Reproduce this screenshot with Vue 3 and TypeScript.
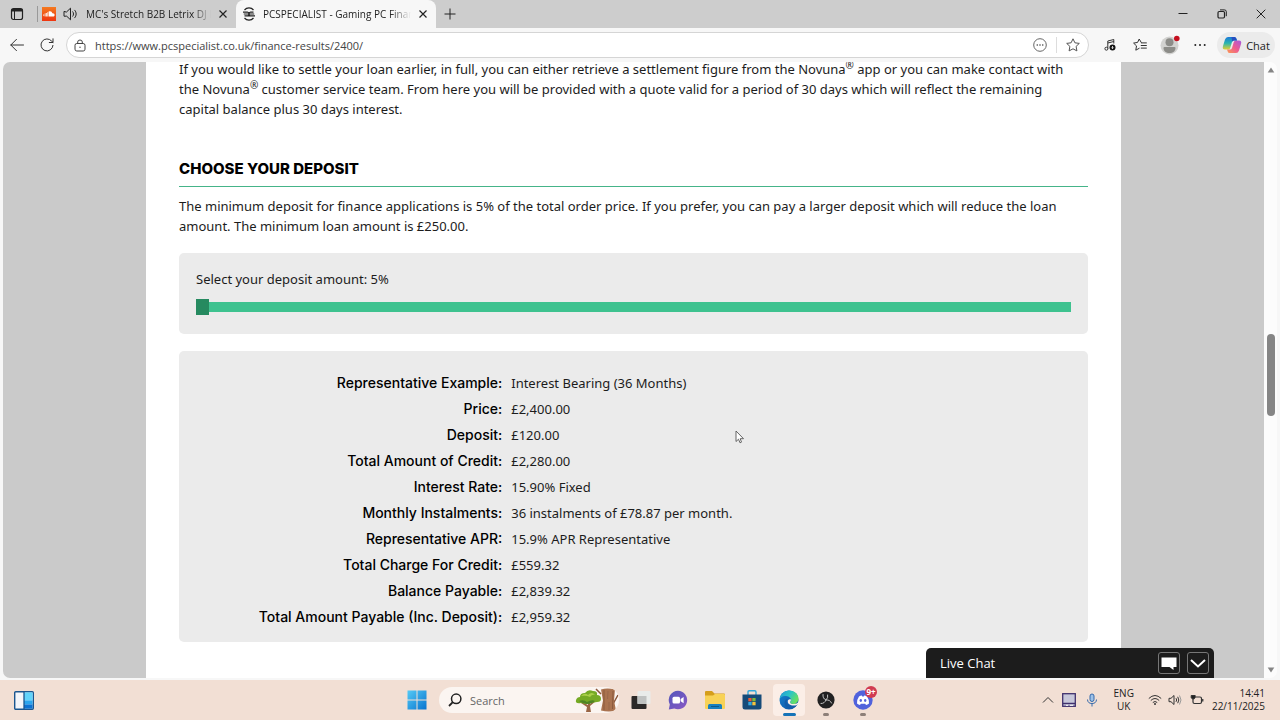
<script setup lang="ts">
import { ref } from 'vue'

interface Row {
  label: string
  value: string
}

const url = ref('https://www.pcspecialist.co.uk/finance-results/2400/')
const query = ref('')
const deposit = ref(5)

const rows: Row[] = [
  { label: 'Representative Example:', value: 'Interest Bearing (36 Months)' },
  { label: 'Price:', value: '£2,400.00' },
  { label: 'Deposit:', value: '£120.00' },
  { label: 'Total Amount of Credit:', value: '£2,280.00' },
  { label: 'Interest Rate:', value: '15.90% Fixed' },
  { label: 'Monthly Instalments:', value: '36 instalments of £78.87 per month.' },
  { label: 'Representative APR:', value: '15.9% APR Representative' },
  { label: 'Total Charge For Credit:', value: '£559.32' },
  { label: 'Balance Payable:', value: '£2,839.32' },
  { label: 'Total Amount Payable (Inc. Deposit):', value: '£2,959.32' },
]
</script>

<template>
  <div class="desktop">
    <header class="tabs">
      <button class="tab-actions" aria-label="Tab actions">
        <svg width="14" height="14" viewBox="0 0 14 14" fill="none" stroke="#222"><rect x="1.5" y="1.5" width="11" height="11" rx="2" stroke-width="1.2" /><path d="M1.5 3.2h11" stroke-width="2.6" /><path d="M4.5 4v8.5" /></svg>
      </button>
      <div class="tab">
        <svg width="14" height="14" viewBox="0 0 14 14"><defs><linearGradient id="sc" x1="0" y1="0" x2="0" y2="1"><stop offset="0" stop-color="#f47a20" /><stop offset="1" stop-color="#ee3510" /></linearGradient></defs><rect width="14" height="14" fill="url(#sc)" /><path d="M6.6 4.6C8.5 3.6 10 4.7 10.3 6.3c1.4-.3 2.3.6 2.3 1.6 0 1-.8 1.6-1.7 1.6H6.6z" fill="#fff" /><path d="M1.8 7.3v1.8M3.2 6.3v3.2M4.5 6v3.5M5.7 5.2v4.3" stroke="#fff" stroke-width=".8" /></svg>
        <svg width="16" height="14" viewBox="0 0 16 14" fill="none" stroke="#222" stroke-linejoin="round" stroke-linecap="round"><path d="M1 4.800v4.400h2.700L7.500 12.800V1.200L3.700 4.800z" /><path d="M9.800 4.8c1 1.2 1 3.2 0 4.4M11.700 3.2c2 2 2 5.6 0 7.6" /></svg>
        <span class="tab-title">MC's Stretch B2B Letrix DJ Mix</span>
        <button aria-label="Close tab"><svg width="10" height="10" viewBox="0 0 10 10" stroke="#222" stroke-width="1.2"><path d="M1.5 1.5l7 7M8.5 1.5l-7 7" /></svg></button>
      </div>
      <div class="tab active">
        <svg width="14" height="14" viewBox="0 0 14 14" fill="none" stroke="#222" stroke-width="1.2"><path d="M2.500 3A5.800 5.800 0 0 1 11.500 3M2.500 11a5.800 5.800 0 0 0 9 0" /><path d="M1 5.100h4.500q1.500 0 1.500 1.900H1.800M13 8.900H8.500Q7 8.900 7 7h5.200M2.500 8.900h3Q7 8.900 7 7t1.500-1.900h3" /></svg>
        <span class="tab-title">PCSPECIALIST - Gaming PC Finance</span>
        <button aria-label="Close tab"><svg width="10" height="10" viewBox="0 0 10 10" stroke="#222" stroke-width="1.2"><path d="M1.5 1.5l7 7M8.5 1.5l-7 7" /></svg></button>
      </div>
      <button class="new-tab" aria-label="New tab"><svg width="12" height="12" viewBox="0 0 12 12" stroke="#222"><path d="M6 .5v11M.5 6h11" /></svg></button>
      <div class="window-buttons">
        <button aria-label="Minimise"><svg width="10" height="10" viewBox="0 0 10 10" stroke="#222"><path d="M.5 4.500h9" /></svg></button>
        <button aria-label="Restore"><svg width="10" height="10" viewBox="0 0 10 10" fill="none" stroke="#222"><rect x="1" y="2.5" width="6.5" height="6.5" rx="1.2" stroke-width="1.2" /><path d="M3 .9h4.5q1.8 0 1.8 1.8v4.5" /></svg></button>
        <button aria-label="Close"><svg width="10" height="10" viewBox="0 0 10 10" stroke="#222"><path d="M.7.7l8.6 8.6M9.3.7L.7 9.3" /></svg></button>
      </div>
    </header>

    <div class="toolbar">
      <button aria-label="Back"><svg width="14" height="14" viewBox="0 0 14 14" fill="none" stroke="#333" stroke-linecap="round"><path d="M13.5 7H.8M6.5 1.3L.8 7l5.7 5.7" /></svg></button>
      <button aria-label="Refresh"><svg width="14" height="14" viewBox="0 0 14 14" fill="none" stroke="#333" stroke-linecap="round"><path d="M13 7.4A6 6 0 1 1 11.7 3.2L13 4.4M13 .8v3.7H9.3" /></svg></button>
      <div class="address">
        <svg width="12" height="13" viewBox="0 0 12 13" fill="none" stroke="#444"><rect x="1" y="4.5" width="10" height="7.5" rx="1.8" /><path d="M3.7 4.5V3q0-2 2.3-2t2.3 2v1.5" /><circle cx="6" cy="8.2" r=".7" fill="#444" stroke="none" /></svg>
        <input v-model="url" type="text" aria-label="Address" />
        <button aria-label="Page actions"><svg width="14" height="14" viewBox="0 0 14 14" fill="none" stroke="#666"><circle cx="7" cy="7" r="6.3" /><path d="M3.6 7h1.4M6.3 7h1.4M9 7h1.4" stroke-width="1.4" /></svg></button>
        <i class="split"></i>
        <button aria-label="Add to favourites"><svg width="14" height="14" viewBox="0 0 14 14" fill="none" stroke="#555" stroke-linejoin="round"><path d="M7 .8l1.9 4 4.4.6-3.2 3 .8 4.5L7 10.8l-3.9 2.1.8-4.5-3.2-3 4.4-.6z" /></svg></button>
      </div>
      <div class="tools">
        <button aria-label="Media"><svg width="12" height="14" viewBox="0 0 12 14" fill="none" stroke="#333"><path d="M3.8 10.5V3l6-1.5v4M3.8 5l6-1.5" /><circle cx="2.4" cy="10.7" r="1.5" /><circle cx="8.5" cy="9.5" r="3" fill="#111" stroke="none" /><path d="M8.5 8v2.4M7.4 9.5l1.1 1.2 1.1-1.2" stroke="#fff" stroke-width=".8" /></svg></button>
        <button aria-label="Favourites"><svg width="14" height="14" viewBox="0 0 14 14" fill="none" stroke="#333" stroke-linejoin="round" stroke-linecap="round"><path d="M8.2 4.4L6.2 1l-1.6 3.4-4 .7 2.9 2.8-.7 4.3 3.4-1.9M8.4 4.9h5M8.2 7.5h5.2M8.2 10.1h5.2" /></svg></button>
        <button aria-label="Profile"><svg width="20" height="20" viewBox="0 0 20 20"><circle cx="9.5" cy="10.5" r="9" fill="#d2d2d0" /><circle cx="9.5" cy="7.3" r="4" fill="#8c8c88" /><path d="M3.5 13q0-1 1-1h10q1 0 1 1c0 3-2.5 5-6 5s-6-2-6-5z" fill="#8c8c88" /><circle cx="16.8" cy="3.5" r="2.8" fill="#c50f1f" /></svg></button>
        <button aria-label="Settings and more"><svg width="12" height="4" viewBox="0 0 12 4" fill="#222"><circle cx="1.3" cy="2" r="1" /><circle cx="6" cy="2" r="1" /><circle cx="10.7" cy="2" r="1" /></svg></button>
        <button class="chat">
          <svg width="20" height="18" viewBox="0 0 20 18"><defs><linearGradient id="c1" x1="0" y1="0" x2="0" y2="1"><stop offset="0" stop-color="#1b78d8" /><stop offset=".5" stop-color="#2ab6b0" /><stop offset="1" stop-color="#e5cf32" /></linearGradient><linearGradient id="c2" x1="1" y1="0" x2="0" y2="1"><stop offset="0" stop-color="#a65ae0" /><stop offset=".5" stop-color="#ee5a90" /><stop offset="1" stop-color="#fb9a52" /></linearGradient></defs><path d="M6 1h6.5q1.3 0 1.8 1.5l.7 2H12q-1.5 0-2 1.5L8.2 12q-.5 1.5-2 1.5H3q-3 0-2-3.5L3 3.600Q3.800 1 6 1z" fill="url(#c1)" /><path d="M14 17H7.500Q6.200 17 5.700 15.500L5 13.500h3q1.500 0 2-1.500l1.800-6q.5-1.500 2-1.500H17q3 0 2 3.500l-2 6.400Q16.200 17 14 17z" fill="url(#c2)" /><path d="M9.500 1h3q1.300 0 1.800 1.500l.7 2h-3q-1.400 0-1.800 1.300z" fill="#264fc0" /></svg>
          <span>Chat</span>
        </button>
      </div>
    </div>

    <div class="viewport">
      <div class="canvas">
        <main class="page">
          <p class="intro">If you would like to settle your loan earlier, in full, you can either retrieve a settlement figure from the Novuna<sup>®</sup> app or you can make contact with the Novuna<sup>®</sup> customer service team. From here you will be provided with a quote valid for a period of 30 days which will reflect the remaining capital balance plus 30 days interest.</p>
          <h2>CHOOSE YOUR DEPOSIT</h2>
          <p>The minimum deposit for finance applications is 5% of the total order price. If you prefer, you can pay a larger deposit which will reduce the loan amount. The minimum loan amount is £250.00.</p>
          <section class="card slider-card">
            <label for="deposit">Select your deposit amount: {{ deposit }}%</label>
            <input id="deposit" v-model.number="deposit" type="range" min="5" max="50" />
          </section>
          <section class="card">
            <table>
              <tbody>
                <tr v-for="row in rows" :key="row.label">
                  <th scope="row">{{ row.label }}</th>
                  <td>{{ row.value }}</td>
                </tr>
              </tbody>
            </table>
          </section>
        </main>
      </div>
      <div class="scrollbar">
        <svg width="8" height="6" viewBox="0 0 8 6"><path d="M4 .5L7.300 5.500H.7z" fill="#858585" /></svg>
        <i class="space-above"></i>
        <i class="thumb"></i>
        <i class="space-below"></i>
        <svg width="8" height="6" viewBox="0 0 8 6"><path d="M4 5.500L7.300 .5H.7z" fill="#858585" /></svg>
      </div>
      <aside class="live-chat">
        <span>Live Chat</span>
        <button aria-label="Open chat"><svg width="16" height="13" viewBox="0 0 16 13"><path d="M.5.500h15v9.500h-3V13L8.500 10h-8z" fill="#fff" /></svg></button>
        <button aria-label="Minimise chat"><svg width="16" height="9" viewBox="0 0 16 9" fill="none" stroke="#fff" stroke-width="2"><path d="M1 1l7 6.500L15 1" /></svg></button>
      </aside>
    </div>

    <footer class="taskbar">
      <div class="left">
        <button aria-label="Widgets"><svg width="20" height="19" viewBox="0 0 20 19"><rect x=".7" y=".7" width="18.600" height="17.600" rx="1" fill="#f4f6fa" stroke="#1b568f" stroke-width="1.400" /><path d="M10 1.400h8.600v8H10z" fill="#62d4fb" /><path d="M10 9.400h8.600v4H10z" fill="#2ba5ee" /><path d="M10 13.400h8.600v4.200H10z" fill="#0b72d3" /><path d="M10 1v17" stroke="#1b568f" stroke-width="1.300" /></svg></button>
      </div>
      <nav class="apps">
        <button aria-label="Start"><svg width="20" height="20" viewBox="0 0 20 20"><defs><linearGradient id="win" x1="0" y1="0" x2="1" y2="1"><stop offset="0" stop-color="#55caf5" /><stop offset="1" stop-color="#0773cf" /></linearGradient></defs><path d="M.5 .5h9v9h-9zM10.500.5h9v9h-9zM.5 10.500h9v9h-9zM10.500 10.500h9v9h-9z" fill="url(#win)" /></svg></button>
        <div class="search">
          <svg width="14" height="14" viewBox="0 0 14 14" fill="none" stroke="#222" stroke-width="1.500"><circle cx="8.200" cy="5.800" r="4.700" /><path d="M4.800 9.200L1 13" stroke-width="1.800" /></svg>
          <input v-model="query" type="text" placeholder="Search" aria-label="Search" />
          <svg width="44" height="24" viewBox="2 0 44 24"><path d="M13 24l1-5-6-4 1-1 6 3V9h2v7l5-4 1 1-6 5 1 6z" fill="#9a6544" /><path d="M3 12q1-3 4-3 0-4 5-4 3-4 8-2 5 0 4 4 4 0 4 4 0 3-4 3l-6 1-5 1-5-1q-6 1-5-3z" fill="#76aa25" /><path d="M8 8q4-4 7-1 4-4 7 0-3-1-5 2-4-2-9-1z" fill="#a9cf48" /><path d="M6 13q5-2 8 1 5-3 8-1-3 3-8 3-4 0-8-3z" fill="#4f8424" /><path d="M23 1l5 5M45 7l-5 9" stroke="#8a563b" stroke-width="1.500" /><path d="M28 1.500q6-2 14 0l-1 11 2 10q-7 2-15 0l2-10z" fill="#aa7350" /><path d="M31 2v20M40 3l-.5 18" stroke="#8b5a3d" /><path d="M35 3l-.5 8M36 14v8" stroke="#95644a" stroke-width=".8" /></svg>
        </div>
        <button aria-label="Task view"><svg width="20" height="20" viewBox="0 0 20 20"><rect x=".5" y="6" width="15" height="13" rx="1" fill="#2b2928" /><rect x="6.500" y="1" width="13" height="13" rx="1" fill="#e9ecea" /><path d="M6.500 6h9v8h-9z" fill="#bfc2c1" /></svg></button>
        <button aria-label="Video chat"><svg width="20" height="20" viewBox="0 0 20 20"><defs><linearGradient id="vc" x1="0" y1="0" x2="1" y2="1"><stop offset="0" stop-color="#5357bb" /><stop offset="1" stop-color="#8a58c4" /></linearGradient></defs><path d="M10 .7a9.300 9.300 0 1 1-3.700 17.900L.8 19.400l1-5A9.300 9.300 0 0 1 10 .7z" fill="url(#vc)" /><rect x="4.500" y="6.700" width="7.500" height="6.800" rx="1.500" fill="#fff" /><path d="M12.600 9l3-2v6.200l-3-2z" fill="#fff" /></svg></button>
        <button aria-label="File Explorer"><svg width="22" height="20" viewBox="0 0 22 20"><path d="M1 2q0-1 1-1h6l2.500 2.500H20q1 0 1 1V8H1z" fill="#d59e1c" /><path d="M1 5.500h8L11 4h9q1 0 1 1v13q0 1-1 1H2q-1 0-1-1z" fill="#f8d257" /><path d="M4 19v-3.500Q4 14 5.500 14h11q1.500 0 1.500 1.500V19z" fill="#1880bf" /><path d="M7 16.500h8" stroke="#105986" /></svg></button>
        <button aria-label="Microsoft Store"><svg width="20" height="20" viewBox="0 0 20 20"><path d="M6 5V2q0-1.200 1.200-1.200h5.600Q14 .8 14 2v3" fill="none" stroke="#33a9dc" stroke-width="1.400" /><path d="M.5 4.500h19V17q0 2.500-2.500 2.500H3Q.5 19.500.5 17z" fill="#164b79" /><path d="M6.300 8h3.300v3.300H6.300z" fill="#ed5b36" /><path d="M10.300 8h3.300v3.300h-3.300z" fill="#80b83b" /><path d="M6.300 12h3.300v3.300H6.300z" fill="#34a8e0" /><path d="M10.300 12h3.300v3.300h-3.300z" fill="#f6c23d" /></svg></button>
        <button class="running current" aria-label="Microsoft Edge"><svg width="20" height="20" viewBox="0 0 20 20"><defs><linearGradient id="e1" x1="0" y1="0" x2="1" y2=".5"><stop offset="0" stop-color="#2495d8" /><stop offset=".55" stop-color="#2cc5c5" /><stop offset="1" stop-color="#66df61" /></linearGradient><linearGradient id="e2" x1="0" y1="0" x2="1" y2="1"><stop offset="0" stop-color="#1683d2" /><stop offset="1" stop-color="#0e4f9e" /></linearGradient></defs><circle cx="10" cy="10" r="9.500" fill="url(#e2)" /><path d="M.5 9.500C1 4.500 5 .5 10 .5c6 0 9.500 4 9.500 8 0 3.500-2.500 5.500-5.500 5.500-2 0-3-.8-3-1.500s1-1 1-2.500C12 7.500 9 6 6 6S1 8 .5 9.500z" fill="url(#e1)" /><path d="M8.500 8.700C5.500 14 10 18 18 14.500 14 21 7 19 5.800 14.500 5 11.500 6.500 9.500 8.500 8.700z" fill="#135ca9" /><path d="M11.900 9.500c.2 1.500-.9 2-.9 3 0 1 2 1.800 4 1.500 2 0 3.500-1 4.600-2.300l.4 1.300-2 2c-5 1.500-9.500-.5-9.200-3.500C8.800 9.800 10 8.700 11.900 9.500z" fill="#fbeee7" /></svg></button>
        <button class="running" aria-label="OBS Studio"><svg width="18" height="18" viewBox="0 0 18 18"><circle cx="9" cy="9" r="8.600" fill="#222122" /><path d="M6 3.500q-.5 4 3 5.500 4-.5 5.500 3M9 9q-1.500 3.800-5 3.500M9 9q2.500-2 1.700-5" fill="none" stroke="#c4c4c4" stroke-width="1" stroke-linecap="round" /></svg></button>
        <button class="running" aria-label="Discord">
          <svg width="20" height="20" viewBox="0 0 20 20"><circle cx="10" cy="10" r="9.700" fill="#5162dc" /><path d="M4 13.500q0-4.500 2-7 1.500-.8 2.800-1l.5 1h1.400l.5-1q1.500.2 2.800 1 2 2.500 2 7-1.500 1.200-3 1.500l-.8-1.300H7.800L7 15q-1.500-.3-3-1.500z" fill="#fff" /><ellipse cx="7.800" cy="10.500" rx="1.200" ry="1.400" fill="#5162dc" /><ellipse cx="12.200" cy="10.500" rx="1.200" ry="1.400" fill="#5162dc" /></svg>
          <b class="badge">9+</b>
        </button>
      </nav>
      <div class="tray">
        <button aria-label="Hidden icons"><svg width="12" height="8" viewBox="0 0 12 8" fill="none" stroke="#333"><path d="M1 6.500l5-5 5 5" /></svg></button>
        <svg width="14" height="14" viewBox="0 0 14 14"><rect x=".7" y=".7" width="12.600" height="12.600" fill="#c7c7da" stroke="#40316d" stroke-width="1.300" /><path d="M1 10.500h12" stroke="#40316d" stroke-width="1.500" /><path d="M4 12.300h2M8 12.300h3" stroke="#fff" /></svg>
        <svg class="mic" width="12" height="14" viewBox="0 0 12 14" fill="none" stroke="#3569ab"><rect x="4" y="1" width="4" height="7.500" rx="2" fill="#9ec2e8" /><path d="M1.500 6.500Q1.700 10.500 6 10.500t4.500-4M6 10.500v3" /></svg>
        <div class="lang">ENG<br />UK</div>
        <svg width="14" height="12" viewBox="0 0 14 12" fill="none" stroke="#333"><path d="M.8 4.500q6.200-6 12.400 0M2.800 6.500q4.200-4 8.400 0M4.800 8.500q2.200-2 4.400 0" /><circle cx="7" cy="10" r="1" fill="#333" stroke="none" /></svg>
        <svg width="14" height="12" viewBox="0 0 14 12" fill="none" stroke="#333" stroke-linejoin="round"><path d="M1 4.300v3.400h2L6 10.500v-9L3 4.300zM8 4.200q1.300 1.800 0 3.600M9.700 2.800q2.200 3.200 0 6.400" /><path d="M11.500 1.500q3 4.500 0 9" stroke="#999" /></svg>
        <svg class="battery" width="14" height="12" viewBox="0 0 14 12" fill="none" stroke="#333"><path d="M5.500 3H10q1.500 0 1.500 1.500v3.500Q11.500 9.500 10 9.500H4.500Q3 9.500 3 8V5M12.800 5v2.500" stroke-width="1.200" /><path d="M1.200 1.500h4v2q-.5 1.500-2 1.500t-2-1.500z" fill="#222" /></svg>
        <div class="clock">14:41<br />22/11/2025</div>
      </div>
    </footer>

    <svg class="pointer" width="10" height="14" viewBox="0 0 10 14"><path d="M1 1v10.500l2.500-2.300L5 12.800l1.500-.7L5.200 8.700h3.300z" fill="#fff" stroke="#555" stroke-width=".9" /></svg>
  </div>
</template>

<style>
html,
body {
  margin: 0;
}
</style>

<style scoped>
.desktop {
  position: relative;
  display: flex;
  flex-direction: column;
  height: 100vh;
  overflow: hidden;
  background: #f7f7f7;
  color: #222;
  font-family: 'Open Sans', 'Noto Sans', sans-serif;
  font-size: 11px;
}
* {
  box-sizing: border-box;
}
button {
  display: flex;
  align-items: center;
  justify-content: center;
  flex: none;
  padding: 0;
  border: 0;
  background: none;
  color: inherit;
  font: inherit;
}
svg {
  display: block;
  flex: none;
}
input {
  font: inherit;
  color: inherit;
  min-width: 0;
}
input:focus {
  outline: none;
}

.tabs {
  display: flex;
  flex: none;
  height: 28px;
  background: #cdcdcd;
}
.tab-actions {
  width: 34px;
  margin-right: 3px;
}
.tab {
  display: flex;
  align-items: center;
  gap: 7px;
  width: 199px;
  padding: 0 8px 0 5px;
}
.tab:not(.active) {
  background: linear-gradient(#999, #999) 0 50% / 1px 16px no-repeat;
}
.tab.active {
  width: 200px;
  padding-left: 6px;
  border-radius: 8px 8px 0 0;
  background: #f7f7f7;
}
.tab-title {
  flex: 1;
  overflow: hidden;
  font-size: 10px;
  white-space: nowrap;
  mask-image: linear-gradient(to right, #000 86%, transparent);
}
.new-tab {
  width: 28px;
}
.window-buttons {
  display: flex;
  margin-left: auto;
}
.window-buttons button {
  width: 39px;
}

.toolbar {
  display: flex;
  flex: none;
  align-items: center;
  height: 34px;
  padding: 0 5px 0 2px;
}
.toolbar > button {
  width: 30px;
}
.address {
  display: flex;
  flex: 1;
  align-items: center;
  gap: 9px;
  height: 26px;
  margin-left: 4px;
  padding: 0 8px 0 7px;
  border: 1px solid #d5d5d5;
  border-radius: 13px;
  background: #fff;
}
.address input {
  flex: 1;
  padding: 0;
  border: 0;
  background: none;
  color: #444;
}
.split {
  width: 1px;
  height: 16px;
  background: #ddd;
}
.tools {
  display: flex;
  align-items: center;
}
.tools button {
  width: 30px;
}
.tools button:first-child {
  margin-left: 6px;
}
.tools .chat {
  gap: 4px;
  width: 58px;
  height: 26px;
  margin-left: 2px;
  border-radius: 13px;
  background: #ebebeb;
}

.viewport {
  position: relative;
  display: flex;
  flex: 1;
  min-height: 0;
  margin: 0 3px;
  overflow: hidden;
  border-radius: 7px;
  background: #fcfcfc;
}
.canvas {
  flex: 1;
  overflow: hidden;
  background: #cacaca;
}
.page {
  max-width: 975px;
  min-height: 100%;
  margin: -3px auto 0;
  padding: 0 33px 40px;
  background: #fff;
  color: #1c1c1c;
  font-family: 'Noto Sans', 'Open Sans', sans-serif;
  font-size: 13px;
  line-height: 20px;
}
.page p {
  margin: 0 0 17px;
  padding-right: 12px;
}
.page .intro {
  margin-bottom: 40px;
}
sup {
  font-size: 10px;
  line-height: 0;
}
h2 {
  margin: 0 0 9px;
  padding-bottom: 7px;
  border-bottom: 1px solid #45b489;
  color: #000;
  font-family: Inter, sans-serif;
  font-size: 15px;
  font-weight: 800;
  line-height: 20px;
}
.card {
  margin-bottom: 17px;
  padding: 19px 0 12px;
  border-radius: 5px;
  background: #ebebeb;
}
.slider-card {
  display: flex;
  flex-direction: column;
  gap: 10px;
  padding: 16px 17px 19px;
}
input[type='range'] {
  width: 100%;
  height: 16px;
  margin: 0;
  appearance: none;
  background: none;
}
input[type='range']::-webkit-slider-runnable-track {
  height: 10px;
  background: #3ec28f;
}
input[type='range']::-webkit-slider-thumb {
  width: 13px;
  height: 16px;
  margin-top: -3px;
  appearance: none;
  background: #268a60;
}
table {
  width: 100%;
  border-collapse: collapse;
  table-layout: fixed;
}
th,
td {
  height: 26px;
  padding: 0 4px 0 5px;
}
th {
  width: 36%;
  color: #000;
  font-family: Inter, sans-serif;
  font-size: 14px;
  font-weight: 500;
  text-align: right;
}

.scrollbar {
  display: flex;
  flex-direction: column;
  align-items: center;
  width: 13px;
  padding: 5px 0;
}
.space-above {
  flex: 261;
}
.thumb {
  flex: 82;
  width: 8px;
  border-radius: 4px;
  background: #858585;
}
.space-below {
  flex: 251;
}
.live-chat {
  position: absolute;
  right: 63px;
  bottom: 0;
  display: flex;
  align-items: center;
  gap: 7px;
  width: 288px;
  height: 30px;
  padding: 0 5px 0 14px;
  border-radius: 5px 5px 0 0;
  background: #1c1c1c;
  color: #fff;
  font-size: 13px;
}
.live-chat span {
  flex: 1;
}
.live-chat button {
  width: 22px;
  height: 22px;
  border: 1px solid #777;
  border-radius: 3px;
}

.taskbar {
  display: grid;
  grid-template-columns: 1fr auto 1fr;
  align-items: center;
  flex: none;
  height: 40px;
  margin-top: 2px;
  background: #f2dfd4;
}
.left {
  padding-left: 14px;
}
.apps {
  display: flex;
  align-items: center;
  gap: 1px;
}
.apps button {
  position: relative;
  width: 36px;
  height: 32px;
}
.search {
  display: flex;
  align-items: center;
  gap: 8px;
  width: 180px;
  height: 26px;
  margin: 0 3px;
  padding: 0 0 0 9px;
  overflow: hidden;
  border-radius: 13px;
  background: #fbf5f1;
}
.search input {
  flex: 1;
  padding: 0;
  border: 0;
  background: none;
}
.search input::placeholder {
  color: #666;
  opacity: 1;
}
.apps .current {
  width: 32px;
  margin: 0 2px;
  border-radius: 4px;
  background: #fbeee7;
}
.running::after {
  position: absolute;
  bottom: 0;
  width: 6px;
  height: 3px;
  border-radius: 2px;
  background: #8d7f78;
  content: '';
}
.current::after {
  width: 13px;
  background: #1673b8;
}
.badge {
  position: absolute;
  top: 2px;
  right: 4px;
  width: 12px;
  height: 12px;
  border-radius: 6px;
  background: #d13b50;
  color: #fff;
  font-size: 8px;
  line-height: 12px;
  text-align: center;
}
.tray {
  display: flex;
  align-items: center;
  justify-content: flex-end;
  gap: 6px;
  padding-right: 15px;
  font-size: 10px;
  line-height: 13px;
}
.tray button {
  margin-right: 2px;
}
.mic {
  margin-left: 4px;
}
.lang {
  margin: 0 8px 0 10px;
  text-align: center;
}
.battery {
  margin-left: 2px;
}
.clock {
  margin-left: 2px;
  text-align: right;
}
.pointer {
  position: absolute;
  left: 735px;
  top: 430px;
}
</style>
